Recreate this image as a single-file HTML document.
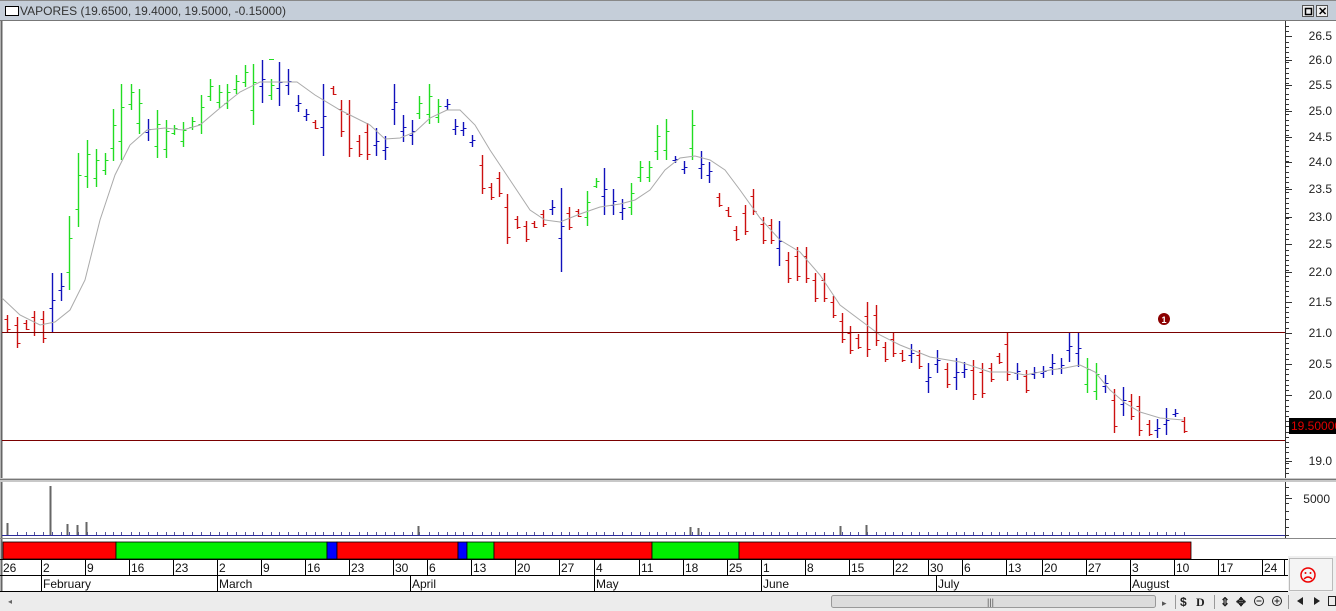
<!DOCTYPE html>
<html><head><meta charset="utf-8"><style>
html,body{margin:0;padding:0;width:1336px;height:611px;overflow:hidden;background:#fff;font-family:"Liberation Sans",sans-serif}
svg{display:block}
</style></head><body>
<svg id="s" width="1336" height="611" xmlns="http://www.w3.org/2000/svg" font-family="Liberation Sans, sans-serif">
<rect x="0" y="0" width="1336" height="611" fill="#fff"/>
<rect x="0" y="0" width="1336" height="21" fill="#c5ced9"/>
<line x1="0" y1="0.5" x2="1336" y2="0.5" stroke="#888"/>
<line x1="0" y1="20.5" x2="1336" y2="20.5" stroke="#777"/>
<rect x="5.5" y="6.5" width="13" height="9" fill="#fff" stroke="#000"/>
<text x="20" y="15" font-size="12" fill="#333">VAPORES (19.6500, 19.4000, 19.5000, -0.15000)</text>
<rect x="1302.5" y="5.5" width="11" height="11" fill="#eee" stroke="#555"/>
<rect x="1305.5" y="8.5" width="6" height="6" fill="none" stroke="#000" stroke-width="1.5"/>
<rect x="1316.5" y="5.5" width="11" height="11" fill="#eee" stroke="#555"/>
<text x="1318" y="15" font-size="11" font-weight="bold">✕</text>
<line x1="1.5" y1="21" x2="1.5" y2="592" stroke="#666" stroke-width="2"/>
<g id="main"></g>
<line x1="2" y1="332.5" x2="1285" y2="332.5" stroke="#7a0000"/>
<line x1="2" y1="440.5" x2="1285" y2="440.5" stroke="#7a0000"/>
<circle cx="1164" cy="319" r="6" fill="#8b0000"/>
<text x="1164" y="323" font-size="9" font-weight="bold" fill="#fff" text-anchor="middle">1</text>
<line x1="1285.5" y1="21" x2="1285.5" y2="478" stroke="#333"/>
<g id="axis" font-size="12" fill="#222"></g>
<rect x="1289" y="418" width="47" height="16" fill="#000"/>
<text x="1291" y="430" font-size="12" fill="#e00000">19.50000</text>
<rect x="0" y="478" width="1336" height="4" fill="#c8c8c8"/>
<line x1="0" y1="479.5" x2="1336" y2="479.5" stroke="#777"/>
<line x1="1285.5" y1="482" x2="1285.5" y2="538" stroke="#333"/>
<text x="1330" y="503" font-size="12" fill="#222" text-anchor="end">5000</text>
<g id="vol"></g>
<line x1="2" y1="535.5" x2="1285" y2="535.5" stroke="#2a2a9a"/>
<line x1="0" y1="538.5" x2="1336" y2="538.5" stroke="#888"/>
<g id="band"></g>
<line x1="0" y1="559.5" x2="1288" y2="559.5" stroke="#000"/>
<line x1="0" y1="575.5" x2="1288" y2="575.5" stroke="#000"/>
<line x1="0" y1="591.5" x2="1288" y2="591.5" stroke="#000"/>
<g id="dates" font-size="12" fill="#111"></g>
<rect x="1288" y="556" width="48" height="36" fill="#f0f0f0"/>
<rect x="1289.5" y="558.5" width="43" height="32" fill="#f4f4f4" stroke="#bbb"/>
<circle cx="1308" cy="575" r="7" fill="none" stroke="#e00" stroke-width="1.5"/>
<circle cx="1305.5" cy="573" r="1" fill="#e00"/><circle cx="1310.5" cy="573" r="1" fill="#e00"/>
<path d="M1304 579 Q1308 575 1312 579" fill="none" stroke="#e00" stroke-width="1.3"/>
<rect x="0" y="592" width="1336" height="19" fill="#ececec"/>
<text x="8" y="604" font-size="8" fill="#666">◂</text>
<rect x="831.5" y="595.5" width="324" height="12" rx="2" fill="#dcdcdc" stroke="#999"/>
<text x="987" y="605" font-size="9" fill="#555">|||</text>
<text x="1162" y="606" font-size="9" fill="#555">▸</text>
<g fill="#222" font-size="12" font-weight="bold">
<line x1="1175.5" y1="595" x2="1175.5" y2="609" stroke="#999"/>
<text x="1180" y="606">$</text><text x="1196" y="606" font-family="Liberation Serif">D</text>
<line x1="1214.5" y1="595" x2="1214.5" y2="609" stroke="#999"/>
<text x="1220" y="606">⇕</text><text x="1236" y="606">✥</text>
<circle cx="1259" cy="601" r="4.5" fill="none" stroke="#222"/><line x1="1256.5" y1="601" x2="1261.5" y2="601" stroke="#222"/>
<circle cx="1277" cy="601" r="4.5" fill="none" stroke="#222"/><line x1="1274.5" y1="601" x2="1279.5" y2="601" stroke="#222"/><line x1="1277" y1="598.5" x2="1277" y2="603.5" stroke="#222"/>
<line x1="1288.5" y1="595" x2="1288.5" y2="609" stroke="#999"/>
<path d="M1303 597 L1297 601 L1303 605 Z"/><path d="M1314 597 L1320 601 L1314 605 Z"/>
<rect x="1328.5" y="596.5" width="7" height="9" fill="none" stroke="#222"/>
</g>
</svg>
<script>
var NS="http://www.w3.org/2000/svg";
function el(p,t,a,txt){var e=document.createElementNS(NS,t);for(var k in a)e.setAttribute(k,a[k]);if(txt!==undefined)e.textContent=txt;document.getElementById(p).appendChild(e);return e;}
var C={g:"#22dd22",r:"#cc1111",b:"#1111bb"};
var D=[[7,315,332,'r'],[17,317,348,'r'],[26,320,330,'r'],[34,311,336,'r'],[43,311,343,'r'],[52,273,332,'b'],[61,273,301,'b'],[69,216,290,'g'],[78,153,227,'g'],[87,140,188,'g'],[96,149,187,'g'],[105,153,175,'g'],[113,109,161,'g'],[121,84,160,'g'],[131,84,110,'g'],[139,89,134,'g'],[148,119,141,'b'],[157,110,158,'g'],[166,120,158,'g'],[174,125,135,'g'],[183,122,147,'g'],[192,117,130,'g'],[201,95,134,'g'],[210,79,101,'g'],[219,85,108,'g'],[227,84,109,'g'],[236,75,94,'g'],[245,65,87,'g'],[253,64,125,'g'],[262,60,103,'b'],[271,79,100,'g'],[279,62,106,'b'],[288,69,95,'b'],[298,95,112,'b'],[306,109,121,'b'],[315,120,129,'r'],[323,84,156,'b'],[333,86,95,'r'],[341,100,137,'r'],[349,100,157,'r'],[359,135,157,'r'],[367,123,160,'r'],[376,128,156,'b'],[385,136,160,'b'],[394,84,125,'b'],[403,115,142,'b'],[412,120,145,'b'],[419,96,119,'g'],[429,84,124,'g'],[438,99,123,'g'],[447,99,110,'b'],[455,119,135,'b'],[463,122,136,'b'],[472,135,147,'b'],[482,155,194,'r'],[491,183,200,'r'],[499,172,197,'r'],[507,194,244,'r'],[517,216,229,'r'],[526,221,242,'r'],[534,221,228,'r'],[543,210,227,'r'],[552,200,215,'b'],[561,188,272,'b'],[569,207,230,'r'],[578,209,217,'r'],[587,191,226,'g'],[596,178,188,'g'],[604,168,215,'b'],[613,189,215,'b'],[622,199,220,'b'],[631,183,215,'g'],[640,161,182,'g'],[649,161,182,'g'],[657,125,160,'g'],[666,119,160,'g'],[675,156,163,'b'],[684,161,174,'b'],[692,110,160,'g'],[701,151,179,'b'],[709,162,183,'b'],[719,193,207,'r'],[728,207,217,'r'],[736,226,241,'r'],[745,205,235,'r'],[753,189,215,'r'],[763,217,244,'r'],[771,219,244,'r'],[779,221,266,'b'],[788,252,283,'r'],[797,247,281,'r'],[806,247,283,'r'],[815,273,302,'r'],[824,273,302,'r'],[833,296,318,'r'],[842,313,343,'r'],[850,326,354,'r'],[858,334,349,'r'],[867,302,357,'r'],[876,305,346,'r'],[885,342,362,'r'],[893,333,357,'r'],[902,350,362,'r'],[911,344,363,'b'],[919,350,369,'r'],[928,363,393,'b'],[937,350,373,'b'],[947,363,388,'r'],[956,358,390,'b'],[964,362,378,'b'],[973,360,400,'r'],[982,363,398,'r'],[991,363,382,'r'],[999,353,364,'r'],[1007,332,381,'r'],[1017,363,380,'b'],[1026,370,393,'r'],[1034,367,379,'b'],[1043,366,378,'b'],[1052,354,375,'b'],[1061,358,374,'b'],[1069,332,362,'b'],[1078,332,367,'b'],[1087,358,393,'g'],[1096,363,400,'g'],[1105,375,393,'b'],[1114,389,433,'r'],[1123,387,416,'b'],[1131,394,420,'r'],[1139,396,436,'r'],[1149,420,436,'r'],[1157,419,438,'b'],[1166,408,435,'b'],[1175,409,417,'b'],[1184,417,433,'r']];
D.forEach(function(d,i){var x=d[0]+0.5,t=d[1],b=d[2],c=C[d[3]],h=b-t,o,cl;
 if(d[3]=='g'){o=t+h*0.75;cl=t+h*0.3;}else if(d[3]=='r'){o=t+h*0.25;cl=t+h*0.85;}else{o=t+h*0.6;cl=t+h*0.45;}
 el('main','line',{x1:x,y1:t,x2:x,y2:b,stroke:c,'stroke-width':1.4});
 el('main','line',{x1:x-3,y1:Math.round(o)+.5,x2:x,y2:Math.round(o)+.5,stroke:c});
 el('main','line',{x1:x,y1:Math.round(cl)+.5,x2:x+3,y2:Math.round(cl)+.5,stroke:c});
 el('vol','line',{x1:x,y1:532,x2:x,y2:535,stroke:"#55559a"});
});
el('main','line',{x1:269,y1:59.5,x2:274,y2:59.5,stroke:C.g});
var MA="2,298 20,315 40,325 55,322 70,310 85,280 100,220 115,175 130,145 147,130 165,128 183,130 200,125 220,108 240,92 260,82 280,82 297,82 315,95 340,110 370,125 385,139 400,138 415,132 430,118 447,110 460,110 475,125 490,150 510,180 530,210 545,220 560,222 580,214 600,207 620,204 635,200 650,190 665,170 680,158 695,156 710,160 725,170 740,190 760,218 780,240 800,252 820,275 840,305 860,320 880,335 900,345 930,357 960,362 990,372 1010,372 1025,375 1050,370 1065,368 1080,365 1095,372 1110,390 1125,403 1140,412 1160,418 1183,420";
el('main','polyline',{points:MA,fill:"none",stroke:"#aaaaaa"});
var L=[[36,'26.5'],[60,'26.0'],[85,'25.5'],[111,'25.0'],[137,'24.5'],[162,'24.0'],[189,'23.5'],[217,'23.0'],[244,'22.5'],[272,'22.0'],[302,'21.5'],[333,'21.0'],[364,'20.5'],[395,'20.0'],[461,'19.0']];
L.forEach(function(l){el('axis','line',{x1:1285,y1:l[0]+.5,x2:1292,y2:l[0]+.5,stroke:"#333"});el('axis','text',{x:1332,y:l[0]+4,'text-anchor':'end'},l[1]);});
for(var y=26;y<478;y+=5.2){el('axis','line',{x1:1285,y1:Math.round(y)+.5,x2:1289,y2:Math.round(y)+.5,stroke:"#333"});}
for(var y=487;y<536;y+=8){el('axis','line',{x1:1285,y1:y+.5,x2:1289,y2:y+.5,stroke:"#333"});}
el('axis','line',{x1:1285,y1:498.5,x2:1292,y2:498.5,stroke:"#333"});
[[7,523],[50,486],[67,524],[77,525],[86,522],[418,526],[690,527],[698,528],[840,526],[866,525]].forEach(function(v){el('vol','line',{x1:v[0]+.5,y1:v[1],x2:v[0]+.5,y2:535,stroke:"#666",'stroke-width':2});});
var B=[[3,116,'#ff0000'],[116,327,'#00ee00'],[327,337,'#0000ff'],[337,458,'#ff0000'],[458,467,'#0000ff'],[467,494,'#00ee00'],[494,652,'#ff0000'],[652,739,'#00ee00'],[739,1191,'#ff0000']];
B.forEach(function(b){el('band','rect',{x:b[0],y:542,width:b[1]-b[0],height:17,fill:b[2],stroke:"#000",'stroke-width':0.8});});
var DT=[[2,'26'],[42,'2'],[86,'9'],[130,'16'],[174,'23'],[218,'2'],[262,'9'],[306,'16'],[350,'23'],[394,'30'],[428,'6'],[472,'13'],[516,'20'],[560,'27'],[595,'4'],[640,'11'],[684,'18'],[728,'25'],[762,'1'],[806,'8'],[850,'15'],[894,'22'],[929,'30'],[963,'6'],[1007,'13'],[1043,'20'],[1087,'27'],[1131,'3'],[1175,'10'],[1219,'17'],[1263,'24']];
DT.forEach(function(d){if(d[0]>3)el('dates','line',{x1:d[0]-0.5,y1:560,x2:d[0]-0.5,y2:575,stroke:"#000"});el('dates','text',{x:d[0]+1,y:572},d[1]);});
var M=[[42,'February'],[218,'March'],[411,'April'],[595,'May'],[762,'June'],[937,'July'],[1131,'August']];
M.forEach(function(m){el('dates','line',{x1:m[0]-0.5,y1:576,x2:m[0]-0.5,y2:591,stroke:"#000"});el('dates','text',{x:m[0]+1,y:588},m[1]);});
el('dates','line',{x1:1284.5,y1:559,x2:1284.5,y2:576,stroke:"#000"});
</script>
</body></html>
